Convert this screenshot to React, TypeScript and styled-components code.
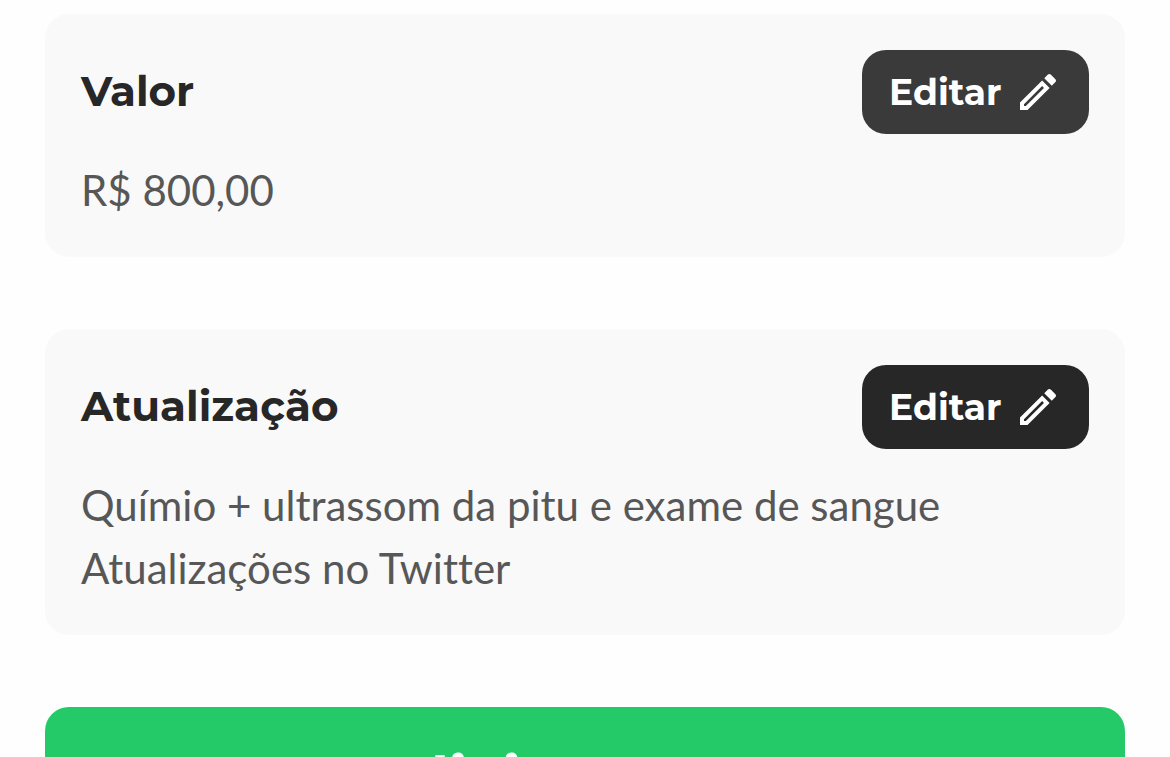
import React from 'react';
import styled, { createGlobalStyle } from 'styled-components';

const GlobalStyle = createGlobalStyle`
  *, *::before, *::after { box-sizing: border-box; }
  body {
    margin: 0;
    background: #fefefe;
    overflow-x: hidden;
    font-family: Lato, 'Liberation Sans', sans-serif;
  }
`;

const headingFont = `Montserrat, Inter, 'Liberation Sans', sans-serif`;

const Page = styled.main`
  display: flex;
  flex-direction: column;
  gap: 72px;
  padding: 14px 45px 45px;
  height: 100vh;
  overflow: hidden;
`;

const Card = styled.section`
  flex: none;
  padding: 36px 36px 35px;
  border-radius: 24px;
  background: #f9f9f9;
`;

const CardHeader = styled.header`
  display: flex;
  align-items: center;
  justify-content: space-between;
  margin-bottom: 25px;
`;

const Title = styled.h2`
  margin: 0;
  padding-bottom: 2px;
  color: #272727;
  font: 700 42px/52px ${headingFont};
`;

const EditButton = styled.button<{ $pressed?: boolean }>`
  display: flex;
  align-items: center;
  justify-content: space-between;
  gap: 12px;
  width: 227px;
  height: 84px;
  padding: 0 27px;
  border: 0;
  border-radius: 24px;
  background: ${({ $pressed }) => ($pressed ? '#3a3a3a' : '#272727')};
  color: #fff;
  font: 700 36px/44px ${headingFont};
  cursor: pointer;
`;

const Icon = styled.svg<{ $size: number }>`
  flex: none;
  width: ${({ $size }) => $size}px;
  height: ${({ $size }) => $size}px;
  fill: currentColor;
`;

const Content = styled.p`
  margin: 0;
  color: #575757;
  font-size: 42px;
  line-height: 63px;
  font-variant-ligatures: none;
`;

const AddButton = styled.button`
  display: flex;
  flex: none;
  align-items: center;
  justify-content: center;
  gap: 72px;
  width: 100%;
  height: 144px;
  border: 0;
  border-radius: 24px;
  background: #25ca68;
  color: #fff;
  font: 700 60px/72px ${headingFont};
  cursor: pointer;
`;

function PencilIcon() {
  return (
    <Icon $size={48} viewBox="0 0 24 24" aria-hidden="true">
      <path d="M14.06 9.02l.92.92L5.92 19H5v-.92l9.06-9.06M17.66 3c-.25 0-.51.1-.7.29l-1.83 1.83 3.75 3.75 1.83-1.83c.39-.39.39-1.02 0-1.41l-2.34-2.34c-.2-.2-.45-.29-.71-.29zm-3.6 3.19L3 17.25V21h3.75L17.81 9.94l-3.75-3.75z" />
    </Icon>
  );
}

function PlusIcon() {
  return (
    <Icon $size={72} viewBox="0 0 24 24" aria-hidden="true">
      <path d="M19 13h-6v6h-2v-6H5v-2h6V5h2v6h6v2z" />
    </Icon>
  );
}

interface InfoCardProps {
  title: string;
  pressed?: boolean;
  children: React.ReactNode;
}

function InfoCard({ title, pressed, children }: InfoCardProps) {
  return (
    <Card>
      <CardHeader>
        <Title>{title}</Title>
        <EditButton type="button" $pressed={pressed}>
          Editar
          <PencilIcon />
        </EditButton>
      </CardHeader>
      <Content>{children}</Content>
    </Card>
  );
}

export default function App() {
  return (
    <>
      <GlobalStyle />
      <Page>
        <InfoCard title="Valor" pressed>
          R$ 800,00
        </InfoCard>
        <InfoCard title="Atualização">
          Químio + ultrassom da pitu e exame de sangue
          <br />
          Atualizações no Twitter
        </InfoCard>
        <AddButton type="button">
          Adicionar
          <PlusIcon />
        </AddButton>
      </Page>
    </>
  );
}
